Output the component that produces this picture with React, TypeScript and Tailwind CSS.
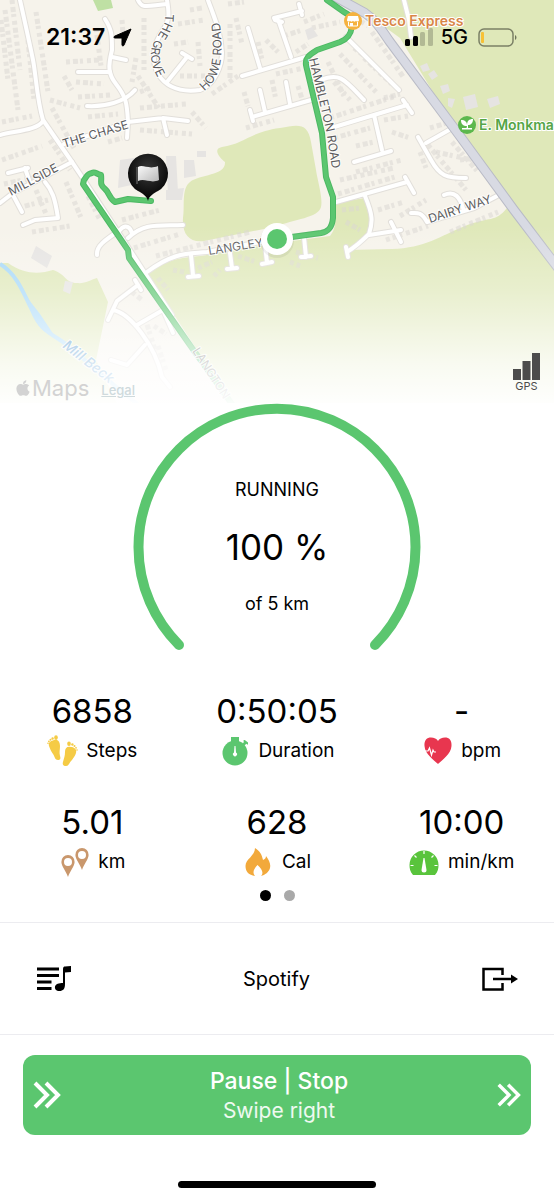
import type { ReactNode } from "react";
import { FaApple } from "react-icons/fa";

const roads = [
  "M20 0C24 18 30 45 33 60S37 100 43 120L72 162L84 180L130 250L172 315",
  "M0 135C15 131 38 130 43 121",
  "M0 203L13 193L72 162",
  "M8 173L28 168M25 168L30 183",
  "M45 182C52 190 55 198 58 218M23 225L35 220L58 218",
  "M13 195L22 212",
  "M105 19C112 30 112 35 112 50C108 66 108 74 116 84C127 98 127 105 128 122L127 138",
  "M112 57L126 60M78 72L110 72M87 106C105 107 125 102 135 90",
  "M64 144L128 122L163 118L188 121M163 118L167 135",
  "M138 0C142 9 146 6 167 4M167 0C169 12 170 20 163 30C153 44 151 60 158 74C168 90 185 92 200 90C215 85 222 65 222 53C221 30 212 12 208 0",
  "M167 82L187 57M182 53L192 59",
  "M248 28L260 68M242 76L306 57M260 90L265 112M252 117L311 100M250 110L253 121M275 20L282 22",
  "M274 18L302 11M299 4L302 15M279 22L291 57M286 82L290 104",
  "M346 37L399 90M321 80C340 72 345 80 364 100",
  "M331 128L407 105M403 100L412 113M374 115L382 150M354 162L391 151",
  "M426 143L449 130M418 137L431 160C440 176 446 178 466 178",
  "M336 202L407 182M405 177L414 193M365 196C373 215 373 222 369 234C360 243 355 247 347 252M346 247L348 257",
  "M369 235L401 230M391 222L401 242",
  "M444 195C455 190 460 198 463 208M497 196L474 208L427 222C421 211 416 213 411 213",
  "M404 0L409 20L411 37",
  "M97 255C96 246 105 240 120 230C126 223 131 228 132 234M128 238C145 222 160 226 183 225",
  "M147 272C175 251 190 254 207 252L277 239L321 233",
  "M191 255L193 275M188 277L199 276M230 253L232 268M227 269L237 268M265 244L267 263M262 264L272 262M304 237L306 257M301 257L311 256",
  "M135 280L141 290M138 285L117 301L108 320M113 310C130 313 155 345 162 377L170 387M137 325L163 310L173 333M145 345L127 365L111 360",
];

const buildingRows = [
  "M5 10L18 110M12 0L20 70M36 12L48 92M28 40L34 100M52 108L74 148M2 122L32 116M1 20L8 80",
  "M96 28L101 66M122 20L124 48M136 58L132 82M66 62L100 60M76 82L104 84M78 97L110 95M88 117L118 114M64 76L72 90M50 100L80 108",
  "M138 76L160 110M140 108L186 104M140 130L192 134M108 142L122 138M50 140L70 170M140 92L150 88M192 112L206 128",
  "M2 160L42 146M4 184L42 176M18 208L48 200M66 182L82 220M32 232L70 226M36 190L46 214M88 196L100 220",
  "M144 18L144 70M178 24L204 20M174 44L188 42M198 42L200 66M180 76L206 76M230 24L230 80M212 94L238 76M190 10L202 8",
  "M236 18L242 44M258 42L262 60M266 40L280 54M244 92L248 106M272 80L276 100M246 128L274 120M228 4L244 2",
  "M284 36L302 30M296 52L308 44M304 22L324 14M276 74L304 68M298 86L303 102M312 28L340 22",
  "M328 62L344 96M340 54L376 92M334 82L350 100M364 58L394 86M354 48L370 60M372 32L404 78M384 98L400 94M350 14L368 26",
  "M330 118L396 96M334 138L370 128M356 146L374 142M384 120L408 116M392 132L410 138M356 172L402 160M340 180L394 168M420 152L426 168",
  "M430 128L450 122M436 152L472 160M452 142L478 172M460 160L476 158M338 194L398 176M378 210L404 202M386 240L428 226M400 216L426 200M450 232L498 212",
  "M122 220L160 210M134 248L180 234M156 256L250 232M158 278L168 290M173 270L184 272M198 268L212 262M214 276L220 270M238 256L256 262M290 262L300 266M296 252L318 258M342 210L362 208M346 222L360 230",
  "M145 318L155 350M154 326L166 334M158 346L166 370M132 292L142 300M428 145L466 190",
];

const route =
  "M151 201L128 199L115 202C109 198 109 192 105 189C99 184 102 182 101 175C96 174 95 171 92 173C87 174 88 175 84 180L83 184L128 250L129 258L192 348L234 407";
const routeNorth =
  "M327 0L344 12C352 16 353 20 352 26C351 34 348 39 340 42L317 50C309 55 305 58 306 65L322 133L326 177L333 197L333 218C332 229 327 232 321 233L277 239";
const highway = "M334 -4L365 13C378 22 382 31 390 42L454 128L514 210L558 268";

function CityMap() {
  return (
    <svg
      viewBox="0 0 554 410"
      preserveAspectRatio="xMidYMin slice"
      className="absolute inset-x-0 top-0 w-full"
      role="img"
      aria-label="Map of the run"
    >
      <defs>
        <linearGradient id="fade" x1="0" y1="0" x2="0" y2="1">
          <stop offset="0" stopColor="#fff" stopOpacity="0" />
          <stop offset="0.35" stopColor="#fff" stopOpacity="0.3" />
          <stop offset="0.75" stopColor="#fff" stopOpacity="0.8" />
          <stop offset="1" stopColor="#fff" />
        </linearGradient>
        <radialGradient id="pin" cx="0.5" cy="0.35" r="0.6">
          <stop offset="0" stopColor="#3a3a3a" />
          <stop offset="1" stopColor="#050505" />
        </radialGradient>
        <linearGradient id="flag" x1="0" y1="0" x2="1" y2="1">
          <stop offset="0" stopColor="#fafafa" />
          <stop offset="1" stopColor="#b8b8b8" />
        </linearGradient>
        <path id="grove" d="M165 14C167 30 151 38 151 54C151 66 155 74 166 92" />
        <path id="howe" d="M204 91C222 78 225 54 218 10" />
        <path id="hambleton" d="M309 59L326 130L334 182" />
      </defs>

      <rect width="554" height="410" fill="#f6f3eb" />
      <g fill="#dfe8b9">
        <path d="M341 0L378 22L400 38L450 120L507 200L554 263V0Z" />
        <path d="M147 273C170 256 190 258 207 255L277 243L330 236C337 228 336 215 334 203L365 198C371 213 373 226 366 236L346 250L392 249C425 248 440 236 465 226S495 223 507 208L554 270V410H236Z" />
        <path d="M280 128C250 132 244 144 222 147C212 149 220 158 225 162C226 176 200 174 190 182C181 189 185 207 183 218C182 235 190 243 204 241L274 227C295 219 318 218 321 207C323 198 318 183 316 170L311 142C308 123 299 124 280 128Z" />
        <path d="M0 263L8 263C25 275 40 274 53 270C66 274 65 283 77 283C85 284 90 280 97 278L108 302L96 360L120 410H0Z" />
        <path d="M93 0L98 11L113 8L111 0Z" fill="#bfe0a4" />
      </g>
      <path d="M0 264C18 275 24 295 32 310C40 330 50 333 63 342S100 375 145 410" fill="none" stroke="#a6d8f8" strokeWidth="4" />
      <path d="M26 296C31 312 36 325 44 331L56 338L40 314Z" fill="#a6d8f8" />

      <g fill="none" stroke="#dad7d3" strokeOpacity="0.55" strokeWidth="5" strokeDasharray="4 3 5 2 3 4">
        {buildingRows.map((d) => (
          <path key={d} d={d} />
        ))}
      </g>
      <g fill="#e6e4e2">
        <path d="M120 160L134 158L136 184L118 188ZM166 156L176 156L178 192L168 194ZM184 160L194 160L196 176L184 178ZM166 190L184 188L182 200L166 200ZM197 151L206 151L206 157L197 157ZM36 246L52 256L47 268L31 258ZM65 281L73 282L70 294L63 291Z" />
        <path d="M463 97L475 94L478 107L466 110ZM487 99L498 96L500 104L490 108ZM448 98L455 99L452 108L448 106ZM420 66L427 63L430 70L423 72ZM428 74L434 70L438 76L432 80ZM440 86L448 84L450 91L443 94ZM305 30L312 27L318 36L308 40Z" />
      </g>

      <g fill="none" stroke="#e2dfda" strokeWidth="6" strokeLinecap="round" strokeLinejoin="round">
        {roads.map((d) => (
          <path key={d} d={d} />
        ))}
      </g>
      <g fill="none" stroke="#fff" strokeWidth="4" strokeLinecap="round" strokeLinejoin="round">
        {roads.map((d) => (
          <path key={d} d={d} />
        ))}
      </g>
      <path d={highway} fill="none" stroke="#b9bbc6" strokeWidth="10" />
      <path d={highway} fill="none" stroke="#d8dae3" strokeWidth="8" />

      <g fill="none" stroke="#4cb863" strokeWidth="6" strokeLinecap="round" strokeLinejoin="round">
        <path d={route} />
        <path d={routeNorth} />
      </g>
      <g fill="none" stroke="#5bc66f" strokeWidth="4" strokeLinecap="round" strokeLinejoin="round">
        <path d={route} />
        <path d={routeNorth} />
      </g>

      <g
        fontFamily="Inter, 'Liberation Sans', sans-serif"
        fontSize="12"
        fill="#5c5c5e"
        stroke="#fff"
        strokeWidth="2"
        strokeOpacity="0.8"
        paintOrder="stroke"
      >
        <text>
          <textPath href="#grove">THE GROVE</textPath>
        </text>
        <text>
          <textPath href="#howe">HOWE ROAD</textPath>
        </text>
        <text>
          <textPath href="#hambleton">HAMBLETON ROAD</textPath>
        </text>
        <text transform="translate(64 148) rotate(-17)">THE CHASE</text>
        <text transform="translate(11 196) rotate(-28)">MILLSIDE</text>
        <text transform="translate(209 255) rotate(-9)">LANGLEY</text>
        <text transform="translate(430 223) rotate(-18)">DAIRY WAY</text>
        <text transform="translate(192 351) rotate(57)" fill="#555">LANGTON</text>
        <text fontSize="14" fontStyle="italic" fontWeight="500" transform="translate(62 347) rotate(38)" fill="#3183c4">
          Mill Beck
        </text>
      </g>

      <rect y="225" width="554" height="185" fill="url(#fade)" />

      <g fontFamily="Inter, 'Liberation Sans', sans-serif" fontWeight="600" stroke="#fff" strokeWidth="2" paintOrder="stroke">
        <text x="365" y="26" fontSize="14" fill="#d98648">Tesco Express</text>
        <text x="479" y="130" fontSize="14" fill="#55a547">E. Monkman</text>
      </g>
      <circle cx="353" cy="21" r="9" fill="#f5b23f" />
      <path d="M348 16H358L359 20C359 22 356 22 356 20.500C356 22 353 22 353 20.500C353 22 350 22 350 20.500C350 22 347 22 347 20Z" fill="#fff" />
      <path d="M348.500 22V26H357.500V22" fill="none" stroke="#fff" strokeWidth="1" />
      <path d="M350 23H353V26H350Z" fill="#fff" />
      <circle cx="467" cy="125" r="9" fill="#5cb84d" />
      <path d="M467 126C463 126 461 124 461 120C465 120 467 122 467 125C467 121 469 119 473 119C473 123 471 125 468 125V128H466.500ZM462 128H472V129.500H462Z" fill="#fff" />

      <path d="M148 201C147 196 142 193 138 191A20 20 0 1 1 158 191C154 193 149 196 148 201Z" fill="url(#pin)" />
      <path d="M138 167C143 164 149 170 158 166L159 180C151 184 145 178 138 181Z" fill="url(#flag)" />
      <path d="M137 167V184" stroke="#777" strokeWidth="1" />

      <circle cx="277" cy="241" r="17" fill="#000" fillOpacity="0.06" />
      <circle cx="277" cy="239" r="16" fill="#fff" />
      <circle cx="277" cy="239" r="10" fill="#5bc66f" />
    </svg>
  );
}

function StatusBar() {
  return (
    <div className="flex items-center pt-6 pr-[37px] pl-[46px]">
      <span className="text-[23px] leading-[26px] font-semibold">21:37</span>
      <svg viewBox="0 0 19 19" className="ml-2 size-[19px]" aria-label="Location in use">
        <path d="M18 1L11 17C10.500 18.500 9 18 9 17V10H2C0.500 10 0.500 8.500 2 8Z" stroke="#000" strokeLinejoin="round" />
      </svg>
      <svg viewBox="0 0 28 18" className="ml-auto h-[18px] w-7" aria-label="Signal">
        <rect x="0" y="11" width="5" height="7" rx="1.5" />
        <rect x="8" y="8" width="5" height="10" rx="1.5" />
        <rect x="15" y="4" width="5" height="14" rx="1.5" fillOpacity="0.2" />
        <rect x="23" y="0" width="5" height="18" rx="1.5" fillOpacity="0.2" />
      </svg>
      <span className="ml-2 text-xl leading-[26px] font-medium">5G</span>
      <svg viewBox="0 0 39 19" className="ml-[10px] h-[19px] w-[39px]" aria-label="Battery low">
        <rect x="1" y="1" width="34" height="17" rx="5" fill="none" stroke="#000" strokeOpacity="0.45" strokeWidth="1.5" />
        <rect x="3" y="4" width="3" height="11" rx="1" fill="#f7c136" />
        <path d="M37 7C39 8 39 11 37 12Z" fillOpacity="0.5" />
      </svg>
    </div>
  );
}

function StepsIcon() {
  return (
    <svg viewBox="0 0 31 32" className="h-8 w-[31px]" fill="#f5cb45">
      <path d="M2 11C1 7 4 6 7 5C11 4 13 7 13 11C13 15 12 17 13 21C14 24 13 25 11 25C8 25 8 22 6 19C4 16 3 14 2 11Z" />
      <ellipse cx="9" cy="2.6" rx="1.8" ry="2.3" />
      <circle cx="5.6" cy="3.5" r="1.2" />
      <circle cx="3.5" cy="4.8" r="1" />
      <circle cx="1.9" cy="6.3" r="0.9" />
      <circle cx="1" cy="8.3" r="0.8" />
      <path d="M29 18C30 14 27 12 24 12C20 11 18 13 18 17C18 21 17 23 16 27C15 30 17 31 19 31C22 31 22 28 25 25C27 22 28 21 29 18Z" />
      <ellipse cx="22" cy="8.8" rx="1.8" ry="2.3" />
      <circle cx="25.4" cy="9.5" r="1.2" />
      <circle cx="27.5" cy="11" r="1" />
      <circle cx="29" cy="12.8" r="0.9" />
      <circle cx="30" cy="15" r="0.8" />
    </svg>
  );
}

function StopwatchIcon() {
  return (
    <svg viewBox="0 0 26 30" className="h-[30px] w-[26px]" fill="#5bc66f">
      <circle cx="13" cy="17" r="12.5" />
      <path d="M9 1H17V6H9ZM20 8L23 5L25 7L22 10Z" />
      <path d="M22.5 5L25.5 7.5" stroke="#5bc66f" strokeWidth="2" strokeLinecap="round" />
      <path d="M12.500 10H13.500L14 16.500A2 2 0 1 1 12 16.500Z" fill="#fff" />
    </svg>
  );
}

function HeartIcon() {
  return (
    <svg viewBox="0 0 28 28" className="size-7">
      <path d="M14 27C10 23 1 17 0.500 9C0 3 3 0.500 7 0.500C10 0.500 13 2 14 4C15 2 18 0.500 21 0.500C25 0.500 28 3 27.500 9C27 17 18 23 14 27Z" fill="#e8364f" />
      <path d="M1 14H4L5.500 11L7.500 18L9 13L10 15H12" fill="none" stroke="#fff" strokeWidth="1.2" />
    </svg>
  );
}

function PinsIcon() {
  return (
    <svg viewBox="0 0 28 30" className="h-[30px] w-7" fill="#c9976c" fillRule="evenodd">
      <path d="M7 8A6.700 6.700 0 0 0 0.400 15C0.400 19 5 24 7 30C9 24 13.600 19 13.600 15A6.700 6.700 0 0 0 7 8ZM7 11A4 4 0 1 1 7 19A4 4 0 1 1 7 11Z" />
      <path d="M21 1A6.700 6.700 0 0 0 14.400 8C14.400 12 19 17 21 23C23 17 27.600 12 27.600 8A6.700 6.700 0 0 0 21 1ZM21 4A4 4 0 1 1 21 12A4 4 0 1 1 21 4Z" />
    </svg>
  );
}

function FlameIcon() {
  return (
    <svg viewBox="0 0 26 28" className="h-7 w-[26px]" fill="#f2a93b">
      <path d="M10 0C15 3 17 7 18 12C20 11 21 10 21 8C24 12 26 16 25 20C24 24 20 27 16 28C19 25 17 21 12.500 17C9 21 7 24 10 28C4 27 0.500 24 0.500 18C0.500 11 10 8 10 0Z" />
    </svg>
  );
}

function GaugeIcon() {
  return (
    <svg viewBox="0 0 30 25" className="h-[25px] w-[30px]">
      <path d="M4 25C1 22 0.500 18 0.500 15A14.500 14.500 0 0 1 29.500 15C29.500 18 29 22 26 25Z" fill="#59c43c" />
      <path d="M15 1V4M5.500 5.500L7.500 7.500M24.500 5.500L22.500 7.500M1.500 15.500H4.500M25.500 15.500H28.500" stroke="#fff" strokeWidth="1.2" />
      <path d="M14.500 8H15.500L17.500 20A2.500 2.500 0 1 1 12.500 20Z" fill="#fff" />
    </svg>
  );
}

const stats = [
  { value: "6858", label: "Steps", icon: <StepsIcon /> },
  { value: "0:50:05", label: "Duration", icon: <StopwatchIcon /> },
  { value: "-", label: "bpm", icon: <HeartIcon /> },
  { value: "5.01", label: "km", icon: <PinsIcon /> },
  { value: "628", label: "Cal", icon: <FlameIcon /> },
  { value: "10:00", label: "min/km", icon: <GaugeIcon /> },
];

function Stat({ value, label, icon }: { value: string; label: string; icon: ReactNode }) {
  return (
    <div className="flex flex-col items-center">
      <span className="text-[33px] leading-10">{value}</span>
      <span className="flex h-10 items-center gap-2 text-[19px]">
        <span className="flex w-[31px] justify-center">{icon}</span>
        {label}
      </span>
    </div>
  );
}

function Chevrons({ className }: { className: string }) {
  return (
    <svg viewBox="0 0 28 28" className={className} fill="none" stroke="#fff" strokeWidth="4">
      <path d="M2 2L14 14L2 26M13 2L25 14L13 26" />
    </svg>
  );
}

export default function App() {
  return (
    <main className="bg-white font-['Inter','Liberation_Sans',sans-serif] text-black">
      <header className="relative overflow-hidden">
        <CityMap />
        <div className="relative flex min-h-[403px] flex-col justify-between">
          <StatusBar />
          <div className="flex items-end pr-[14px] pb-[3px] pl-[14px]">
            <span className="flex items-center text-[22px] leading-6 text-[#d3d3d3]">
              <FaApple className="size-[18px]" />
              Maps
            </span>
            <a href="#legal" className="ml-3 text-[13px] leading-5 font-medium text-[#cfdadd] underline">
              Legal
            </a>
            <div className="mb-2 ml-auto flex flex-col items-center text-[11px] leading-3 text-[#4c4c4c]">
              <svg viewBox="0 0 27 27" className="size-[27px]" fill="#4c4c4c">
                <path d="M0 16H8V27H0ZM9.500 8H17.500V27H9.500ZM19 0H27V27H19Z" />
              </svg>
              GPS
            </div>
          </div>
        </div>
      </header>

      <section className="grid justify-items-center">
        <svg viewBox="0 0 288 250" className="col-start-1 row-start-1 h-[250px] w-72" aria-hidden="true">
          <path d="M46 242A138.500 138.500 0 1 1 242 242" fill="none" stroke="#5bc66f" strokeWidth="10" strokeLinecap="round" />
        </svg>
        <div className="col-start-1 row-start-1 flex flex-col items-center pt-[73px]">
          <p className="text-lg leading-7">RUNNING</p>
          <p className="mt-[23px] text-[35px] leading-10">100 %</p>
          <p className="mt-[23px] text-lg leading-7">of 5 km</p>
        </div>
      </section>

      <section className="grid grid-cols-3 gap-y-[31px] pt-[38px]">
        {stats.map((stat) => (
          <Stat key={stat.label} {...stat} />
        ))}
      </section>

      <div className="flex justify-center gap-[13px] pt-2 pb-[21px]">
        <span className="size-[11px] rounded-full bg-black" />
        <span className="size-[11px] rounded-full bg-[#a9a9a9]" />
      </div>

      <section className="flex h-[113px] items-center justify-between border-y border-[#ececf0] px-9">
        <button type="button" aria-label="Playlist">
          <svg viewBox="0 0 36 26" className="h-[26px] w-9">
            <path d="M1 3H23M1 9.500H23M1 16H15.500M1 22.500H15.500" stroke="#000" strokeWidth="3" />
            <path d="M27 3C27 1 28 0.500 29 0.500L35 0V6L29 6.500V18C29 23 27 25 23.500 25C20 25 18.500 23 19 20.500C19.500 18 23 17 27 17Z" />
          </svg>
        </button>
        <span className="text-xl">Spotify</span>
        <button type="button" aria-label="Open player">
          <svg viewBox="0 0 37 26" className="h-[26px] w-[37px]">
            <path d="M21.500 9V3H2.500V23.500H21.500V17" fill="none" stroke="#000" strokeWidth="2.5" />
            <path d="M12 13H31" stroke="#000" strokeWidth="2.5" />
            <path d="M30 8.500L37 13L30 17.500Z" />
          </svg>
        </button>
      </section>

      <div className="px-[23px] pt-5">
        <button type="button" className="flex h-20 w-full items-center justify-between rounded-xl bg-[#5bc66f] px-[10px] text-white">
          <Chevrons className="size-7" />
          <span className="flex flex-col pt-[2px]">
            <span className="text-[23px] leading-[30px] font-medium">Pause | Stop</span>
            <span className="text-[21px] leading-[30px] text-white/90">Swipe right</span>
          </span>
          <Chevrons className="size-6" />
        </button>
      </div>

      <div className="flex justify-center pt-[46px] pb-3">
        <span className="h-[7px] w-[198px] rounded-full bg-black" />
      </div>
    </main>
  );
}
